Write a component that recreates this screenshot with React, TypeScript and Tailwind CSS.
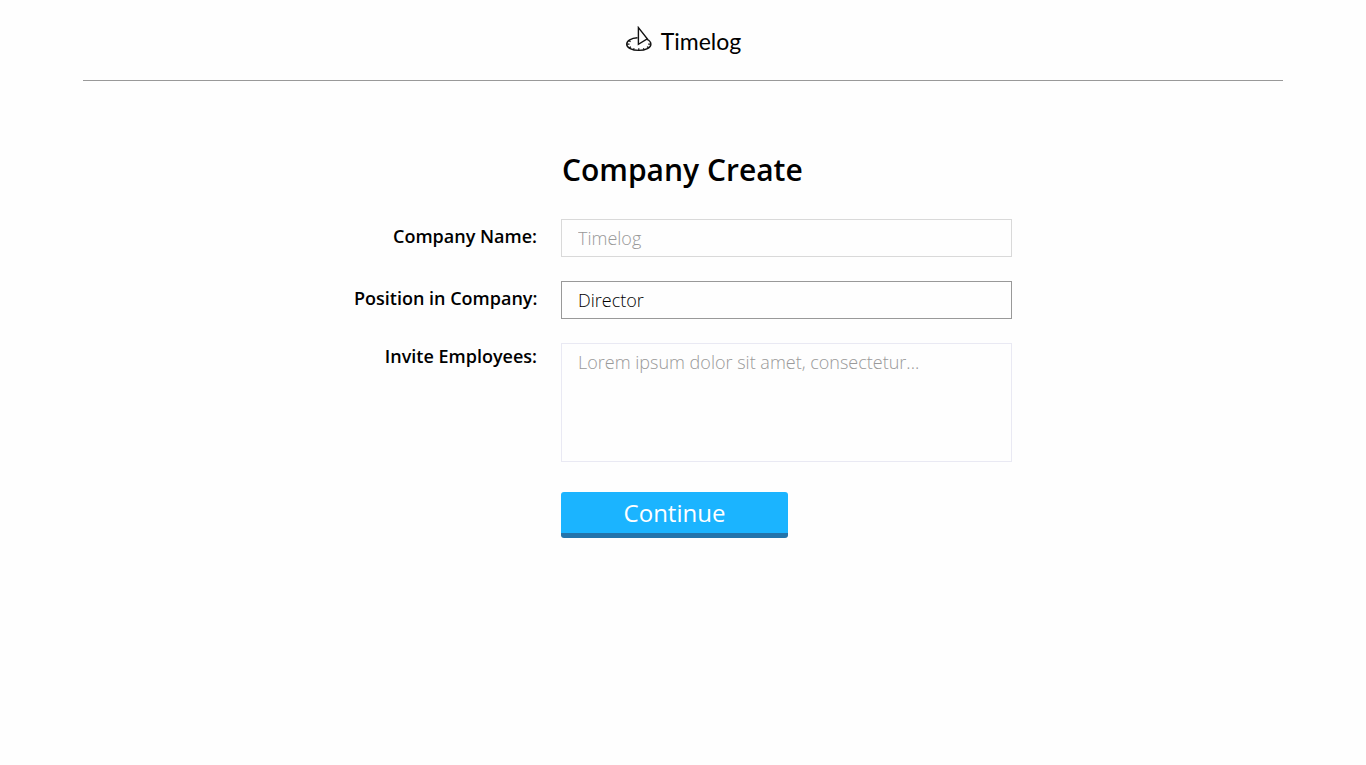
function Logo() {
  return (
    <svg className="h-7 w-7 shrink-0" viewBox="0 0 28 28" fill="none" stroke="#111" strokeWidth="1.4" aria-hidden="true">
      <path d="M12.500 11.800C6 12.100 1.700 14.800 1.700 18.200S6.900 24.400 13.800 24.400 25.900 21.700 25.900 18.200C25.900 16.200 24.600 14.500 22 13.300" />
      <path d="M13.400 1.600V18.300L22.300 12.900Z" strokeLinejoin="miter" />
      <path d="M2 18.200H4.500M23.200 18.200H25.600M13.800 22.200V24.400M4 14.800L5.600 15.600M4.200 21.800L6 20.900M8.300 23.800L9.200 22.300M19.200 23.700L18.400 22.200M23.600 21.600L21.900 20.800" strokeWidth="1.200" />
    </svg>
  );
}

const label = "whitespace-nowrap text-lg leading-6 font-semibold sm:text-right";
const field =
  "block w-full rounded-none border bg-[#fefefe] px-4 text-lg leading-6 font-light text-black placeholder:text-[#999] placeholder:opacity-100 outline-none";

export default function App() {
  return (
    <div className="min-h-screen bg-[#fefefe] font-['Open_Sans',sans-serif] text-black">
      <header className="mx-auto flex h-[81px] max-w-[1200px] items-center justify-center gap-2 border-b border-[#999]">
        <Logo />
        <span className="pt-px font-['Lato',sans-serif] text-[23px] leading-8">Timelog</span>
      </header>

      <main className="mx-auto max-w-[658px] pt-[69px]">
        <form
          className="grid grid-cols-1 gap-x-6 gap-y-6 sm:grid-cols-[183px_1fr]"
          onSubmit={(event) => event.preventDefault()}
        >
          <h1 className="mb-[5px] pl-px text-3xl leading-10 font-semibold sm:col-start-2">Company Create</h1>

          <label htmlFor="company" className={`${label} pt-[5px]`}>Company Name:</label>
          <input id="company" type="text" placeholder="Timelog" className={`${field} h-[38px] border-[#d9d9d9]`} />

          <label htmlFor="position" className={`${label} pt-[5px]`}>Position in Company:</label>
          <input id="position" type="text" defaultValue="Director" className={`${field} h-[38px] border-[#999]`} />

          <label htmlFor="invite" className={`${label} pt-px`}>Invite Employees:</label>
          <textarea
            id="invite"
            placeholder="Lorem ipsum dolor sit amet, consectetur..."
            className={`${field} h-[119px] resize-none border-[#e9e9f3] py-[6px]`}
          />

          <button
            type="submit"
            className="mt-[6px] h-[46px] w-[227px] rounded-[3px] border-b-[5px] border-[#2374ab] bg-[#1bb4ff] text-2xl leading-8 text-white sm:col-start-2"
          >
            Continue
          </button>
        </form>
      </main>
    </div>
  );
}
